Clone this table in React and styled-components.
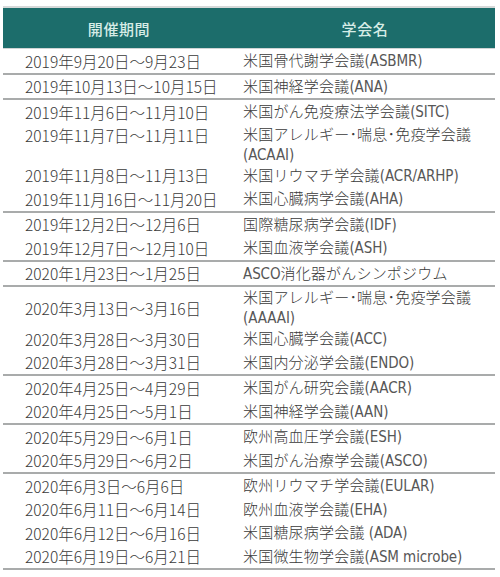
import React from "react";
import styled, { createGlobalStyle } from "styled-components";

const Global = createGlobalStyle`
  html, body { margin: 0; padding: 0; background: #ffffff; }
  body { font-family: "Noto Sans CJK JP", "Noto Sans", sans-serif; }
`;

const Page = styled.div`
  padding: 6px 5px 0 3px;
  width: 500px;
  box-sizing: border-box;
`;

const Table = styled.div`
  display: flex;
  flex-direction: column;
  border-top: 2px solid #d6d9d9;
`;

const Head = styled.div`
  display: grid;
  grid-template-columns: 232px 1fr;
  height: 40px;
  background: #1c6d6b;
  border-bottom: 1px solid #cfd4d4;
`;

const HeadCell = styled.div`
  display: flex;
  align-items: center;
  justify-content: center;
  color: #d6ece6;
  font-size: 15px;
  font-weight: 500;
  letter-spacing: 0.6px;
`;

const Row = styled.div`
  display: grid;
  grid-template-columns: 232px 1fr;
  align-items: center;
  height: ${(p) => p.$h}px;
  overflow: hidden;
  border-bottom: ${(p) => (p.$sep ? "2px solid #a9abab" : "none")};
`;

const DateCell = styled.div`
  padding-left: 22px;
  font-size: 15.5px;
  font-weight: 300;
  line-height: 20px;
  color: #3a3a3a;
  align-self: ${(p) => (p.$top ? "start" : "center")};
  padding-top: ${(p) => (p.$top ? "1px" : "0")};
  white-space: nowrap;
`;

const NameCell = styled.div`
  padding-left: 8px;
  font-family: "Liberation Sans Narrow", "DejaVu Sans Condensed", "Noto Sans CJK JP", sans-serif;
  font-size: 15px;
  line-height: 20px;
  color: #575757;
  white-space: nowrap;
  letter-spacing: -0.1px;
`;

const Cjk = styled.span`
  font-family: "Noto Sans CJK JP", sans-serif;
  font-weight: 300;
  color: #3a3a3a;
  letter-spacing: 0.2px;
  line-height: 20px;
`;

const rows = [
  { d: "2019年9月20日～9月23日", n: [["米国骨代謝学会議", "(ASBMR)"]], sep: true },
  { d: "2019年10月13日～10月15日", n: [["米国神経学会議", "(ANA)"]], sep: true },
  { d: "2019年11月6日～11月10日", n: [["米国がん免疫療法学会議", "(SITC)"]] },
  { d: "2019年11月7日～11月11日", n: [["米国アレルギー･喘息･免疫学会議", ""], ["", "(ACAAI)"]], top: true },
  { d: "2019年11月8日～11月13日", n: [["米国リウマチ学会議", "(ACR/ARHP)"]] },
  { d: "2019年11月16日～11月20日", n: [["米国心臓病学会議", "(AHA)"]], sep: true },
  { d: "2019年12月2日～12月6日", n: [["国際糖尿病学会議", "(IDF)"]] },
  { d: "2019年12月7日～12月10日", n: [["米国血液学会議", "(ASH)"]], sep: true },
  { d: "2020年1月23日～1月25日", n: [["", "ASCO"], ["消化器がんシンポジウム", ""]], sep: true, inline: true },
  { d: "2020年3月13日～3月16日", n: [["米国アレルギー･喘息･免疫学会議", ""], ["", "(AAAAI)"]] },
  { d: "2020年3月28日～3月30日", n: [["米国心臓学会議", "(ACC)"]] },
  { d: "2020年3月28日～3月31日", n: [["米国内分泌学会議", "(ENDO)"]], sep: true },
  { d: "2020年4月25日～4月29日", n: [["米国がん研究会議", "(AACR)"]] },
  { d: "2020年4月25日～5月1日", n: [["米国神経学会議", "(AAN)"]], sep: true },
  { d: "2020年5月29日～6月1日", n: [["欧州高血圧学会議", "(ESH)"]] },
  { d: "2020年5月29日～6月2日", n: [["米国がん治療学会議", "(ASCO)"]], sep: true },
  { d: "2020年6月3日～6月6日", n: [["欧州リウマチ学会議", "(EULAR)"]] },
  { d: "2020年6月11日～6月14日", n: [["欧州血液学会議", "(EHA)"]] },
  { d: "2020年6月12日～6月16日", n: [["米国糖尿病学会議", " (ADA)"]] },
  { d: "2020年6月19日～6月21日", n: [["米国微生物学会議", "(ASM microbe)"]], sep: true },
];

function Name({ parts, inline }) {
  return (
    <>
      {parts.map(([c, l], i) => (
        <React.Fragment key={i}>
          {i > 0 && !inline && <br />}
          {c && <Cjk>{c}</Cjk>}
          {l}
        </React.Fragment>
      ))}
    </>
  );
}

export default function App() {
  return (
    <Page>
      <Global />
      <Table>
        <Head>
          <HeadCell>開催期間</HeadCell>
          <HeadCell>学会名</HeadCell>
        </Head>
        {rows.map((r, i) => {
          const double = !r.inline && r.n.length > 1;
          return (
            <Row key={i} $sep={r.sep} $h={double ? 40 : 23.5}>
              <DateCell $top={r.top}>{r.d}</DateCell>
              <NameCell>
                <Name parts={r.n} inline={r.inline} />
              </NameCell>
            </Row>
          );
        })}
      </Table>
    </Page>
  );
}
